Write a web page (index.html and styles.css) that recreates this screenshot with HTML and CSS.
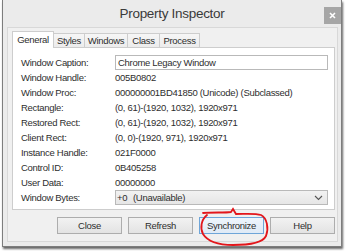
FILE: index.html
```html
<!DOCTYPE html>
<html lang="en">
<head>
    <meta charset="UTF-8">
    <title>Property Inspector</title>
    <link rel="stylesheet" href="styles.css">
</head>
<body>
    <!-- Dialog Window -->
    <div class="window">
        <div class="titlebar">
            <span></span>
            <span class="title">Property Inspector</span>
            <span class="close-btn">
                <svg width="17" height="17" viewBox="0 0 17 17"><path d="M6 6 L11 11 M11 6 L6 11" stroke="#fff" stroke-width="1.6"/></svg>
            </span>
        </div>

        <div class="client">
            <!-- Tabs -->
            <div class="tabs">
                <div class="tab active">General</div>
                <div class="tab">Styles</div>
                <div class="tab">Windows</div>
                <div class="tab">Class</div>
                <div class="tab">Process</div>
            </div>

            <!-- General Page -->
            <div class="panel">
                <div class="label">Window Caption:</div>
                <div class="textbox">Chrome Legacy Window</div>

                <div class="label">Window Handle:</div>
                <div class="value">005B0802</div>

                <div class="label">Window Proc:</div>
                <div class="value">000000001BD41850 (Unicode) (Subclassed)</div>

                <div class="label">Rectangle:</div>
                <div class="value">(0, 61)-(1920, 1032), 1920x971</div>

                <div class="label">Restored Rect:</div>
                <div class="value">(0, 61)-(1920, 1032), 1920x971</div>

                <div class="label">Client Rect:</div>
                <div class="value">(0, 0)-(1920, 971), 1920x971</div>

                <div class="label">Instance Handle:</div>
                <div class="value">021F0000</div>

                <div class="label">Control ID:</div>
                <div class="value">0B405258</div>

                <div class="label">User Data:</div>
                <div class="value">00000000</div>

                <div class="label">Window Bytes:</div>
                <div class="combo">
                    <span class="combo-index">+0</span>
                    <span class="combo-text">(Unavailable)</span>
                    <svg width="9" height="6" viewBox="0 0 9 6"><path d="M1 1 L4.5 4.5 L8 1" fill="none" stroke="#555" stroke-width="1.1"/></svg>
                </div>
            </div>

            <!-- Buttons -->
            <div class="buttons">
                <div class="btn">Close</div>
                <div class="btn">Refresh</div>
                <div class="btn focused">Synchronize</div>
                <div class="btn">Help</div>
            </div>
        </div>
    </div>

    <!-- Red hand-drawn circle -->
    <svg class="scribble" width="350" height="251" viewBox="0 0 350 251">
        <path d="M203 213 C214 212, 224 213, 231 212 L233 209 L236 214 C245 214, 255 213, 261 215 C267 218, 269 228, 266 236 C263 242, 250 245, 233 245 C219 245, 208 242, 203 234 C200 228, 201 220, 207 215" fill="none" stroke="#e3161b" stroke-width="1.8" stroke-linecap="round"/>
    </svg>
</body>
</html>
```

FILE: styles.css
```css
/* General Reset */
* {
    margin: 0;
    padding: 0;
    box-sizing: border-box;
}

body {
    font-family: 'Liberation Sans', Arial, sans-serif;
    font-size: 9.5px;
    letter-spacing: -0.3px;
    color: #2e2e2e;
    background: #fff;
    position: relative;
    width: 350px;
    height: 251px;
    overflow: hidden;
}

/* Window Frame */
.window {
    margin-left: 2px;
    width: 340px;
    height: 247px;
    background: #ebebeb;
    border: 1px solid #7d7d7d;
    border-top: none;
    box-shadow: 1px 2px 2px rgba(0, 0, 0, 0.6);
}

.titlebar {
    height: 27px;
    display: grid;
    grid-template-columns: 1fr auto 1fr;
}

.title {
    padding-top: 5px;
    line-height: 18px;
    font-size: 13.5px;
    letter-spacing: -0.3px;
    color: #3a3a3a;
}

.close-btn {
    justify-self: end;
    margin-top: 7px;
    width: 17px;
    height: 17px;
    background: #a6a6a6;
}

.close-btn svg {
    display: block;
}

/* Client Area */
.client {
    margin: 0 3px 0 4px;
    height: 215px;
    background: #f0f0f0;
    border: 1px solid #d8d8d8;
    padding: 3px 2px 0 4px;
}

/* Tabs */
.tabs {
    display: flex;
    align-items: flex-end;
    height: 16px;
}

.tab {
    height: 14px;
    line-height: 13px;
    text-align: center;
    background: linear-gradient(#f6f6f6, #ececec);
    border: 1px solid #cdcdcd;
    border-bottom: none;
    margin-left: -1px;
}

.tab:nth-child(1) { width: 42px; }
.tab:nth-child(2) { width: 32px; }
.tab:nth-child(3) { width: 44px; }
.tab:nth-child(4) { width: 33px; }
.tab:nth-child(5) { width: 41px; }

.tab.active {
    height: 17px;
    margin-left: 0;
    margin-bottom: -1px;
    line-height: 15px;
    background: #fff;
    position: relative;
    z-index: 1;
}

/* Property Page */
.panel {
    background: #fff;
    border: 1px solid #cdcdcd;
    padding: 7px 6px 4px 8px;
    display: grid;
    grid-template-columns: 94px 1fr;
    grid-auto-rows: 15px;
    align-items: center;
}

.textbox {
    height: 15px;
    line-height: 13px;
    border: 1px solid #b9b9b9;
    padding-left: 2px;
}

.combo {
    height: 15px;
    display: flex;
    align-items: center;
    background: linear-gradient(#f2f2f2, #e6e6e6);
    border: 1px solid #b9b9b9;
    padding: 0 4px 0 1px;
}

.combo-index {
    width: 16px;
}

.combo-text {
    flex: 1;
}

.combo svg {
    display: block;
}

/* Buttons */
.buttons {
    display: flex;
    justify-content: flex-end;
    gap: 6px;
    margin-top: 7px;
}

.btn {
    width: 65px;
    height: 17px;
    line-height: 15px;
    text-align: center;
    background: linear-gradient(#f2f2f2, #e3e3e3);
    border: 1px solid #adadad;
}

.btn.focused {
    background: linear-gradient(#eef5fc, #dfeaf6);
    border-color: #6ea5d8;
}

/* Hand-drawn Highlight */
.scribble {
    position: absolute;
    top: 0;
    left: 0;
    pointer-events: none;
}
```
